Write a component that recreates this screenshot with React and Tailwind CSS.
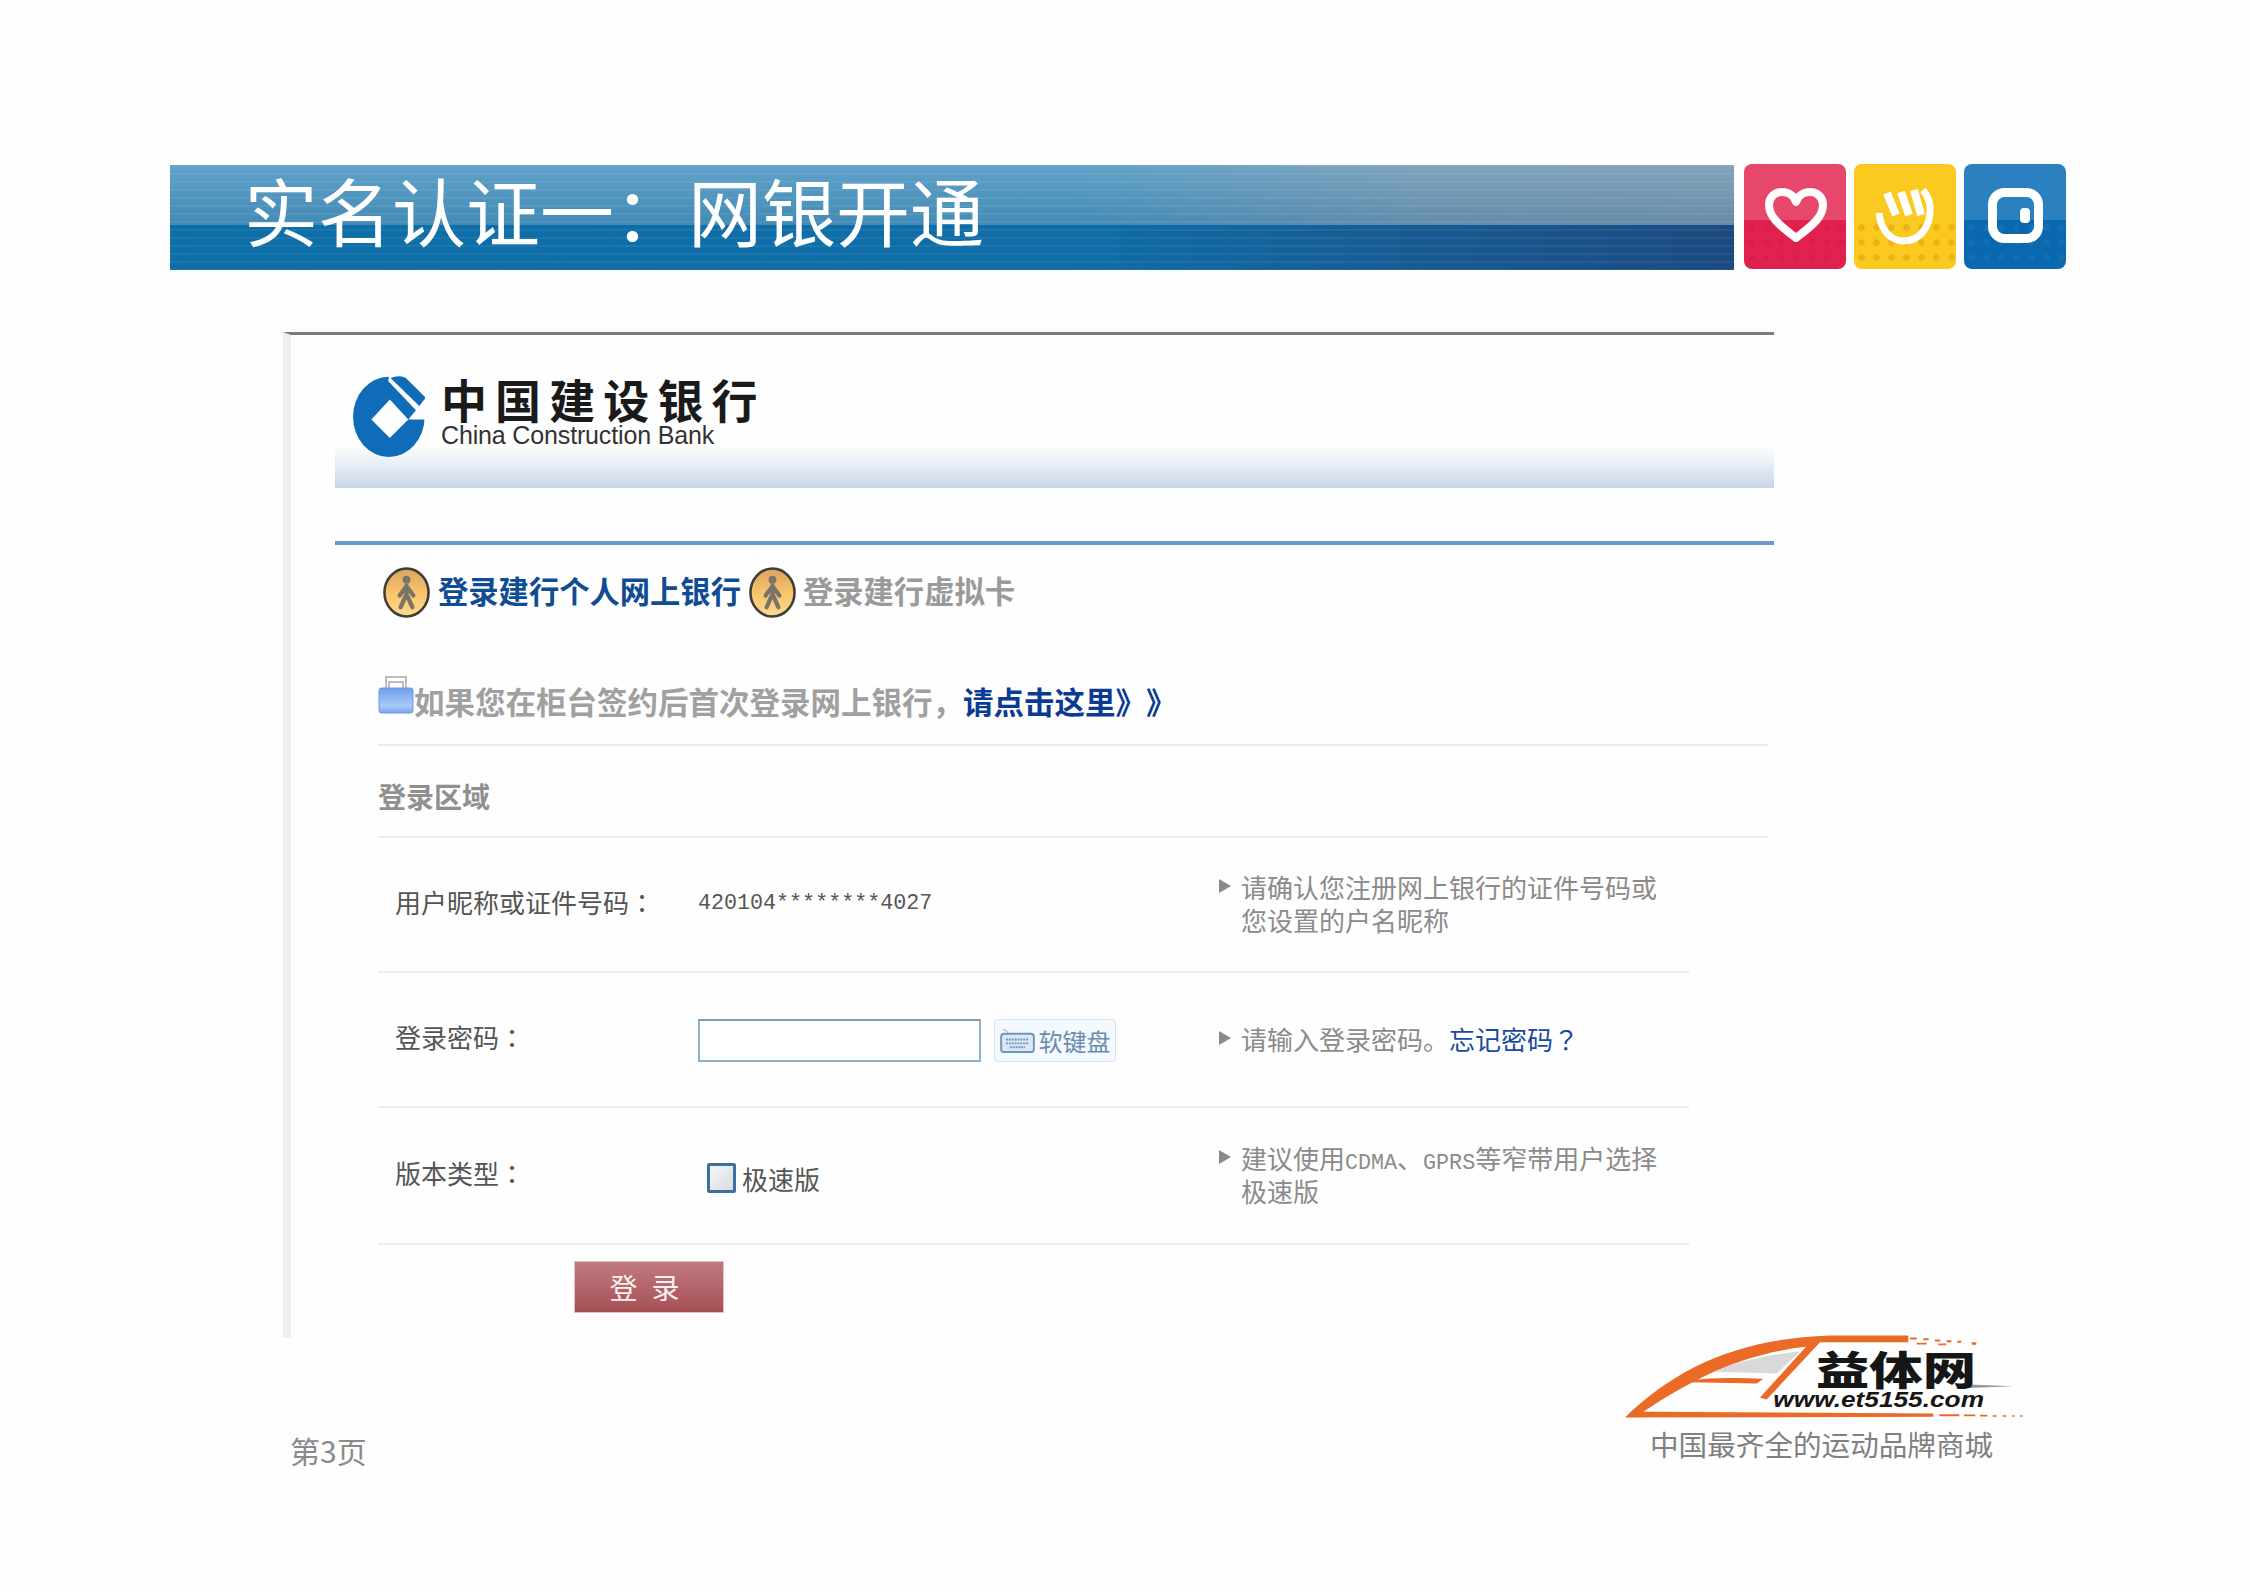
import React from 'react';

const cjk = "font-['Noto_Sans_CJK_SC','Noto_Sans',sans-serif]";

// Top tiles
function Tile({ top, bottom, dot, children }) {
  return (
    <div className="relative w-[102px] h-[105px] rounded-[8px] overflow-hidden flex items-center justify-center" style={{ background: `linear-gradient(${top} 0 53%, ${bottom} 53% 100%)` }}>
      <div className="absolute inset-x-0 bottom-0 top-[53%] bg-[length:15px_15px]" style={{ backgroundImage: `radial-gradient(circle, ${dot} 0 3px, transparent 3.5px)` }} />
      <svg viewBox="0 0 102 105" className="relative w-[102px] h-[105px]" fill="none" stroke="#fff" strokeLinejoin="round">
        {children}
      </svg>
    </div>
  );
}

function WalkIcon() {
  return (
    <svg viewBox="0 0 50 54" className="w-[49px] h-[53px] shrink-0">
      <defs>
        <linearGradient id="walkFill" x1="0" y1="0" x2="0" y2="1">
          <stop offset="0" stopColor="#d9a45e" />
          <stop offset="0.55" stopColor="#fbc66c" />
          <stop offset="1" stopColor="#ffd98f" />
        </linearGradient>
      </defs>
      <ellipse cx="25" cy="27" rx="22.5" ry="24.5" fill="url(#walkFill)" stroke="#3f3d38" strokeWidth="2.6" />
      <circle cx="25" cy="14" r="4" fill="#7a7468" />
      <path d="M25 20 L25 31 M24 22 L18 30 M26 22 L32 30 M24 31 L19 42 M26 31 L31 42" stroke="#7a7468" strokeWidth="4.4" strokeLinecap="round" fill="none" />
    </svg>
  );
}

// Centred full-width punctuation, as in the bitmap font of the page
function Punct({ children }) {
  return <span className="font-['Noto_Sans_CJK_TC',sans-serif] [text-spacing-trim:space-all]">{children}</span>;
}

function Latin({ children }) {
  return <span className="text-[21.7px] leading-none font-['Liberation_Mono',monospace]">{children}</span>;
}

function FormRow({ label, hint, children, className }) {
  return (
    <div className={`flex items-center border-b-2 border-[#ececec] ${className}`}>
      <div className="w-[320px] pl-[17px] mb-[6px] text-[26px] leading-[33px] text-[#555555] whitespace-nowrap">{label}<Punct>：</Punct></div>
      <div className="w-[521px] flex items-center">{children}</div>
      <div className="flex mb-[3px]">
        <div className="w-[22px] pt-[9px] shrink-0">
          <div className="w-0 h-0 border-y-[7px] border-y-transparent border-l-[12px] border-l-[#8a8a8a]" />
        </div>
        <div className="text-[26px] leading-[33px] text-[#8b8b8b] whitespace-nowrap">{hint}</div>
      </div>
    </div>
  );
}

function BrandLogo() {
  return (
    <div className="w-[420px]">
      <svg viewBox="60 60 1260 290" className="w-[420px] h-[97px]">
        <path d="M75 322 C230 170 420 85 690 76 L925 76 L925 96 L660 96 L500 268 L480 262 L618 110 C450 128 300 190 130 305 L1000 310 L1000 320 Z" fill="#ea6a26" />
        <path d="M270 212 C340 200 420 204 490 206 L470 220 L270 216 Z" fill="#ea6a26" />
        <path d="M340 185 C420 150 520 132 600 124 L530 190 Z" fill="#d9d9d9" />
        <path d="M930 82 h20 v6 h-20z M970 84 h16 v6 h-16z M1005 88 h16 v6 h-16z M1040 90 h14 v6 h-14z M1072 92 h12 v6 h-12z M1115 96 h14 v8 h-14z M950 98 h30 v5 h-30z M1015 100 h24 v5 h-24z" fill="#ea6a26" />
        <path d="M1018 312 h60 v6 h-60z M1092 313 h34 v5 h-34z M1140 314 h22 v5 h-22z M1178 315 h12 v5 h-12z M1208 315 h10 v5 h-10z M1236 315 h8 v5 h-8z M1260 315 h8 v5 h-8z" fill="#ea6a26" />
        <path d="M1090 222 L1240 228 L1090 234 Z" fill="#9a9a9a" />
        <text x="648" y="224" textLength="480" lengthAdjust="spacingAndGlyphs" fontSize="118" fontWeight="900" fill="#161616" fontFamily="'Noto Sans CJK SC',sans-serif">益体网</text>
        <text x="520" y="292" textLength="632" lengthAdjust="spacingAndGlyphs" fontSize="66" fontWeight="700" fontStyle="italic" fill="#161616" fontFamily="'Liberation Sans',sans-serif">www.et5155.com</text>
      </svg>
      <div className="ml-[30px] text-[28.6px] leading-[34px] text-[#808080] whitespace-nowrap">中国最齐全的运动品牌商城</div>
    </div>
  );
}

export default function App() {
  return (
    <div className={`w-[2252px] h-[1594px] bg-[#fefefe] pt-[164px] overflow-hidden ${cjk}`}>
      {/* Slide title */}
      <div className="flex items-start ml-[170px]">
        <div className="relative w-[1564px] h-[105px] mt-px mr-[10px] pl-[74px] flex items-center">
          <div className="absolute inset-x-0 top-0 h-[60px] bg-[linear-gradient(90deg,#4a95c1_0%,#4a95c1_58%,#6d97b4_80%,#7396b0_100%)]" />
          <div className="absolute inset-x-0 top-0 h-[60px] bg-[linear-gradient(rgba(255,255,255,0.12),rgba(0,40,80,0.1))]" />
          <div className="absolute inset-x-0 bottom-0 top-[60px] bg-[linear-gradient(90deg,#0e6fa8_0%,#0f6ca6_60%,#185a92_80%,#1b4a80_100%)]" />
          <div className="absolute inset-0 bg-[repeating-linear-gradient(rgba(255,255,255,0.06)_0_2px,transparent_2px_8px)]" />
          <div className="relative pb-[18px] text-[74px] leading-[86px] text-white whitespace-nowrap">实名认证一：网银开通</div>
        </div>
        <div className="flex gap-[8px]">
          <Tile top="#e8476c" bottom="#e1224f" dot="rgba(190,20,60,0.25)">
            <path d="M52 74 C38 63 25 54 25 41 C25 33 31 28 38 28 C45 28 50 32 52 38 C54 32 59 28 66 28 C73 28 79 33 79 41 C79 54 66 63 52 74 Z" strokeWidth="8" />
          </Tile>
          <Tile top="#fbc91f" bottom="#fbc91f" dot="rgba(215,150,20,0.45)">
            <path d="M25 49 C27 68 38 77 50 77 C66 77 77 62 76 44 C76 37 73 31 69 26" strokeWidth="7" />
            <path d="M33 29 L42 51 M47 28 L55 51 M60 26 L67 51" strokeWidth="8" />
          </Tile>
          <Tile top="#2b80c0" bottom="#0a68b0" dot="rgba(255,255,255,0.04)">
            <rect x="28.5" y="28.5" width="46" height="46" rx="12" strokeWidth="9" />
            <rect x="56" y="44" width="10" height="15" rx="4" fill="#fff" stroke="none" />
          </Tile>
        </div>
      </div>

      {/* Screenshot of the bank login page */}
      <div className="mt-[62px] ml-[283px] w-[1491px] h-[1006px] border-t-[3px] border-t-[#7c7c78] border-l-[8px] border-l-[#eeeeee] pl-[44px]">
        <div className="h-[153px] pb-[30px] flex items-end bg-[linear-gradient(#fefefe_0%,#fefefe_72%,#e6edf5_85%,#c6d5e6_100%)]">
          <svg viewBox="40 30 215 245" className="w-[72px] h-[82px] ml-[18px] shrink-0">
            <ellipse cx="147" cy="152" rx="107" ry="120" fill="#0f6cb8" />
            <path d="M150 100 L205 160 L150 215 L95 160 Z" fill="#fefefe" />
            <path d="M145 45 L150 20 L280 20 L280 160 L205 160 L228 132 Z" fill="#fefefe" />
            <path d="M152 36 Q175 26 197 35 L257 95 L238 120 Z" fill="#0f6cb8" />
          </svg>
          <div className="ml-[16px] mb-[10px]">
            <div className="text-[46px] leading-[44px] tracking-[8.1px] font-bold text-[#1a1a1a] whitespace-nowrap">中国建设银行</div>
            <div className="mt-[2px] text-[25px] leading-[26px] tracking-[-0.15px] text-[#333333] font-['Liberation_Sans',sans-serif] whitespace-nowrap">China Construction Bank</div>
          </div>
        </div>

        <div className="mt-[53px] h-[4px] bg-[#6b9bca]" />

        <div className="h-[94px] pl-[47px] flex items-center text-[30.3px] font-bold">
          <WalkIcon />
          <span className="mb-[2px] ml-[7px] text-[#0f4c94] whitespace-nowrap">登录建行个人网上银行</span>
          <span className="ml-[7px]"><WalkIcon /></span>
          <span className="mb-[2px] ml-[6px] text-[#9a9a9a] whitespace-nowrap">登录建行虚拟卡</span>
        </div>

        <div className="ml-[43px] w-[1390px] h-[107px] pb-[23px] flex items-end border-b-2 border-[#ececec] text-[30.5px] leading-[40px] font-bold">
          <svg viewBox="0 0 36 40" className="w-[36px] h-[40px] shrink-0 mb-[7px]">
            <defs>
              <linearGradient id="lockFill" x1="0" y1="0" x2="0" y2="1">
                <stop offset="0" stopColor="#6f9fec" />
                <stop offset="0.7" stopColor="#a9c8f8" />
                <stop offset="1" stopColor="#7aa6ea" />
              </linearGradient>
            </defs>
            <path d="M8 15 V3 H28 V15 M11 15 V8 H25 V15" fill="none" stroke="#a9a9a9" strokeWidth="1.5" />
            <rect x="1" y="14" width="34" height="25" rx="2.5" fill="url(#lockFill)" stroke="#6d97dc" />
          </svg>
          <span className="text-[#a0a0a0] whitespace-nowrap">如果您在柜台签约后首次登录网上银行，</span>
          <span className="text-[#0b3a94] whitespace-nowrap [text-spacing-trim:space-all]">请点击这里》》</span>
        </div>

        <div className="ml-[43px] w-[1390px] h-[92px] pt-[10px] flex items-center border-b-2 border-[#ececec] text-[28px] font-bold text-[#909090]">登录区域</div>

        <div className="ml-[43px] w-[1311px]">
          <FormRow label="用户昵称或证件号码" hint={<>请确认您注册网上银行的证件号码或<br />您设置的户名昵称</>} className="h-[135px]">
            <span className="text-[21.7px] font-['Liberation_Mono',monospace] text-[#555555]">420104********4027</span>
          </FormRow>
          <FormRow label="登录密码" hint={<>请输入登录密码。<span className="text-[#1a4aa0]">忘记密码<Punct>？</Punct></span></>} className="h-[135px]">
            <div className="mt-[2px] w-[283px] h-[43px] border-2 border-[#8fb0c8] border-t-[#7e9db4] bg-white" />
            <div className="mt-[2px] ml-[13px] w-[122px] h-[43px] rounded-[4px] border border-[#d3e3f2] bg-[#f4f9fd] flex items-center justify-center gap-[4px] text-[24px] text-[#6a8bb0]">
              <svg viewBox="0 0 36 26" className="w-[35px] h-[25px]">
                <path d="M8 6 C8 2 4 3 3 1" fill="none" stroke="#7d9fc4" strokeWidth="1" />
                <rect x="1" y="6" width="34" height="19" rx="3" fill="#dbe8f5" stroke="#6f94bd" strokeWidth="2" />
                <path d="M6 12 H30 M6 16 H30 M10 20 H26" stroke="#6f94bd" strokeWidth="2" strokeDasharray="2 1" />
              </svg>
              <span className="whitespace-nowrap">软键盘</span>
            </div>
          </FormRow>
          <FormRow label="版本类型" hint={<>建议使用<Latin>CDMA</Latin>、<Latin>GPRS</Latin>等窄带用户选择<br />极速版</>} className="h-[137px]">
            <div className="mt-[5px] ml-[9px] w-[29px] h-[30px] border-[3px] border-[#3f6f9f] rounded-[2px] bg-[linear-gradient(135deg,#f6f6f6,#d6dde4)]" />
            <span className="mt-[5px] ml-[6px] text-[26px] text-[#555555] whitespace-nowrap">极速版</span>
          </FormRow>
        </div>

        <div className="mt-[16px] ml-[239px] w-[150px] h-[52px] pl-[5px] flex items-center justify-center border border-[#e6c0c0] bg-[linear-gradient(#c17a80,#a8555a_90%,#a04a4e)] text-[28px] tracking-[14px] text-[#fdf0f0]">登录</div>
      </div>

      {/* Footer */}
      <div className="-mt-[8px] flex items-start">
        <div className="ml-[290px] mt-[100px] text-[30px] leading-[40px] text-[#8a8a8a] whitespace-nowrap">第3页</div>
        <div className="ml-auto mr-[212px]"><BrandLogo /></div>
      </div>
    </div>
  );
}
